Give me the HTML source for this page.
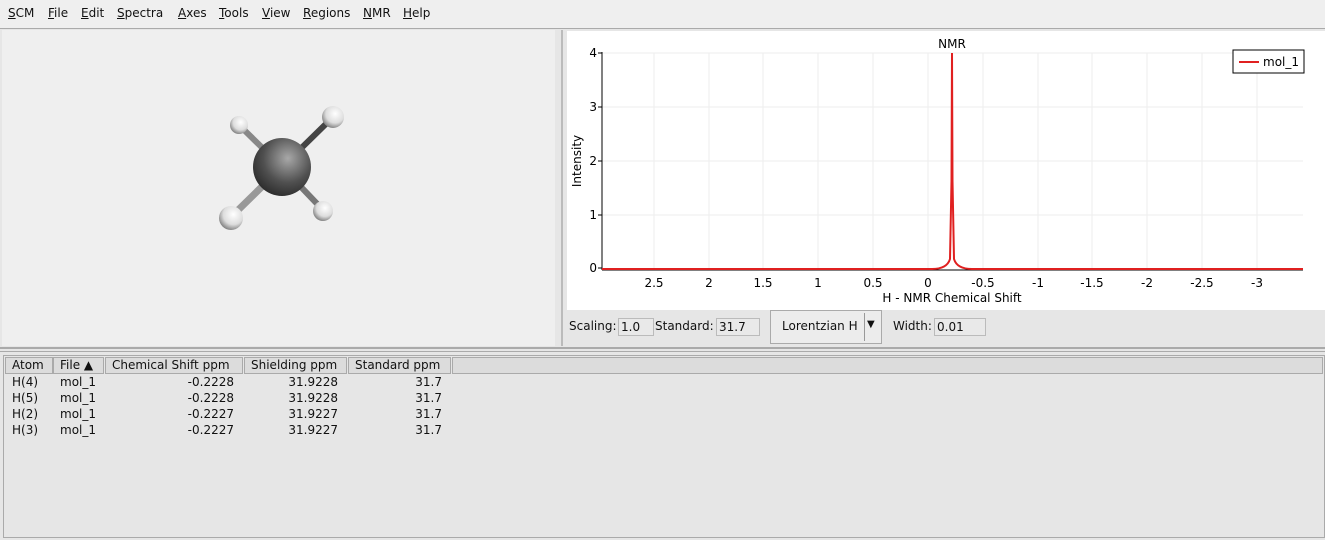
<!DOCTYPE html>
<html><head><style>
body{margin:0;width:1325px;height:540px;background:#e6e6e6;font-family:"DejaVu Sans","Liberation Sans",sans-serif;font-size:12px;color:#111;position:relative;overflow:hidden}
.a{position:absolute}
.menu{left:0;top:0;width:1325px;height:28px;background:#efefef;border-bottom:1px solid #aaa}
.menu span{position:absolute;top:6px}
u{text-decoration:underline}
.inp{position:absolute;height:18px;border:1px solid #bbb;background:#e9e9e9;box-sizing:border-box;padding-left:2px;line-height:16px}
.th{position:absolute;top:357px;height:17px;background:#dcdcdc;border:1px solid #aaa;box-sizing:border-box;line-height:15px;padding-left:6px}
.td{position:absolute;height:16px;line-height:16px}
</style></head><body>
<div class="a menu">
<span style="left:8px"><u>S</u>CM</span><span style="left:48px"><u>F</u>ile</span><span style="left:81px"><u>E</u>dit</span><span style="left:117px"><u>S</u>pectra</span><span style="left:178px"><u>A</u>xes</span><span style="left:219px"><u>T</u>ools</span><span style="left:262px"><u>V</u>iew</span><span style="left:303px"><u>R</u>egions</span><span style="left:363px"><u>N</u>MR</span><span style="left:403px"><u>H</u>elp</span>
</div>
<div class="a" style="left:2px;top:30px;width:553px;height:316px;background:#efefef"></div>
<div class="a" style="left:561px;top:30px;width:2px;height:316px;background:#bbb"></div>
<div class="a" style="left:567px;top:31px;width:758px;height:279px;background:#fff"></div>
<div class="a" style="left:567px;top:310px;width:758px;height:36px;background:#e6e6e6"></div>
<div class="a" style="left:0;top:347px;width:1325px;height:2px;background:#aaa"></div>
<div class="a" style="left:0;top:351px;width:1325px;height:1px;background:#aaa"></div>
<svg class="a" style="left:200px;top:90px" width="160" height="150">
<defs>
<radialGradient id="c" cx="0.6" cy="0.35" r="0.7"><stop offset="0" stop-color="#a8a8a8"/><stop offset="0.6" stop-color="#505050"/><stop offset="1" stop-color="#2a2a2a"/></radialGradient>
<radialGradient id="h" cx="0.6" cy="0.35" r="0.7"><stop offset="0" stop-color="#fff"/><stop offset="0.6" stop-color="#ddd"/><stop offset="1" stop-color="#777"/></radialGradient>
</defs>
<line x1="82" y1="77" x2="39" y2="35" stroke="#888" stroke-width="6"/>
<line x1="82" y1="77" x2="133" y2="27" stroke="#444" stroke-width="6"/>
<line x1="82" y1="77" x2="31" y2="127" stroke="#999" stroke-width="7"/>
<line x1="82" y1="77" x2="123" y2="120" stroke="#777" stroke-width="6"/>
<circle cx="39" cy="35" r="9" fill="url(#h)"/>
<circle cx="133" cy="27" r="11" fill="url(#h)"/>
<circle cx="82" cy="77" r="29" fill="url(#c)"/>
<circle cx="31" cy="128" r="12" fill="url(#h)"/>
<circle cx="123" cy="121" r="10" fill="url(#h)"/>
</svg>
<svg class="a" style="left:567px;top:31px" width="758" height="279" font-size="12" font-family="DejaVu Sans,sans-serif">
<g stroke="#eee">
<line x1="87" y1="22" x2="87" y2="238"/><line x1="142" y1="22" x2="142" y2="238"/><line x1="196" y1="22" x2="196" y2="238"/><line x1="251" y1="22" x2="251" y2="238"/><line x1="306" y1="22" x2="306" y2="238"/><line x1="361" y1="22" x2="361" y2="238"/><line x1="416" y1="22" x2="416" y2="238"/><line x1="471" y1="22" x2="471" y2="238"/><line x1="525" y1="22" x2="525" y2="238"/><line x1="580" y1="22" x2="580" y2="238"/><line x1="635" y1="22" x2="635" y2="238"/><line x1="690" y1="22" x2="690" y2="238"/>
<line x1="35" y1="22" x2="736" y2="22"/><line x1="35" y1="76" x2="736" y2="76"/><line x1="35" y1="130" x2="736" y2="130"/><line x1="35" y1="184" x2="736" y2="184"/>
</g>
<line x1="35" y1="21" x2="35" y2="239" stroke="#000"/>
<line x1="35" y1="239" x2="736" y2="239" stroke="#000"/>
<g stroke="#000"><line x1="31" y1="22" x2="35" y2="22"/><line x1="31" y1="76" x2="35" y2="76"/><line x1="31" y1="130" x2="35" y2="130"/><line x1="31" y1="184" x2="35" y2="184"/><line x1="31" y1="237" x2="35" y2="237"/></g>
<g text-anchor="end"><text x="30" y="26">4</text><text x="30" y="80">3</text><text x="30" y="134">2</text><text x="30" y="188">1</text><text x="30" y="241">0</text></g>
<text transform="translate(14,130) rotate(-90)" text-anchor="middle">Intensity</text>
<g text-anchor="middle"><text x="87" y="256">2.5</text><text x="142" y="256">2</text><text x="196" y="256">1.5</text><text x="251" y="256">1</text><text x="306" y="256">0.5</text><text x="361" y="256">0</text><text x="416" y="256">-0.5</text><text x="471" y="256">-1</text><text x="525" y="256">-1.5</text><text x="580" y="256">-2</text><text x="635" y="256">-2.5</text><text x="690" y="256">-3</text></g>
<text x="385" y="271" text-anchor="middle">H - NMR Chemical Shift</text>
<text x="385" y="17" text-anchor="middle">NMR</text>
<path d="M35 238 L365 238 Q380 238 383 228 L384.5 150 L385 22 L385.5 150 L387 228 Q390 238 405 238 L736 238" fill="none" stroke="#e02020" stroke-width="2"/>
<rect x="666" y="19" width="71" height="23" fill="#fff" stroke="#000"/>
<line x1="672" y1="31" x2="692" y2="31" stroke="#e02020" stroke-width="2"/>
<text x="696" y="35">mol_1</text>
</svg>
<div class="a" style="left:569px;top:319px">Scaling:</div>
<div class="inp" style="left:618px;top:318px;width:36px">1.0</div>
<div class="a" style="left:655px;top:319px">Standard:</div>
<div class="inp" style="left:716px;top:318px;width:44px">31.7</div>
<div class="a" style="left:770px;top:310px;width:112px;height:34px;border:1px solid #aaa;box-sizing:border-box;background:#ececec"></div>
<div class="a" style="left:782px;top:319px">Lorentzian H</div>
<div class="a" style="left:864px;top:313px;width:1px;height:28px;background:#999"></div>
<div class="a" style="left:867px;top:319px;font-size:10px">▼</div>
<div class="a" style="left:893px;top:319px">Width:</div>
<div class="inp" style="left:934px;top:318px;width:52px">0.01</div>
<div class="a" style="left:3px;top:355px;width:1322px;height:183px;border:1px solid #aaa;box-sizing:border-box;background:#e6e6e6"></div>
<div class="th" style="left:5px;width:48px">Atom</div>
<div class="th" style="left:53px;width:51px">File ▲</div>
<div class="th" style="left:105px;width:138px">Chemical Shift ppm</div>
<div class="th" style="left:244px;width:103px">Shielding ppm</div>
<div class="th" style="left:348px;width:103px">Standard ppm</div>
<div class="th" style="left:452px;width:871px"></div>
<div class="td" style="left:12px;top:374px">H(4)<br>H(5)<br>H(2)<br>H(3)</div>
<div class="td" style="left:60px;top:374px">mol_1<br>mol_1<br>mol_1<br>mol_1</div>
<div class="td" style="left:150px;width:84px;text-align:right;top:374px">-0.2228<br>-0.2228<br>-0.2227<br>-0.2227</div>
<div class="td" style="left:250px;width:88px;text-align:right;top:374px">31.9228<br>31.9228<br>31.9227<br>31.9227</div>
<div class="td" style="left:380px;width:62px;text-align:right;top:374px">31.7<br>31.7<br>31.7<br>31.7</div>
</body></html>
